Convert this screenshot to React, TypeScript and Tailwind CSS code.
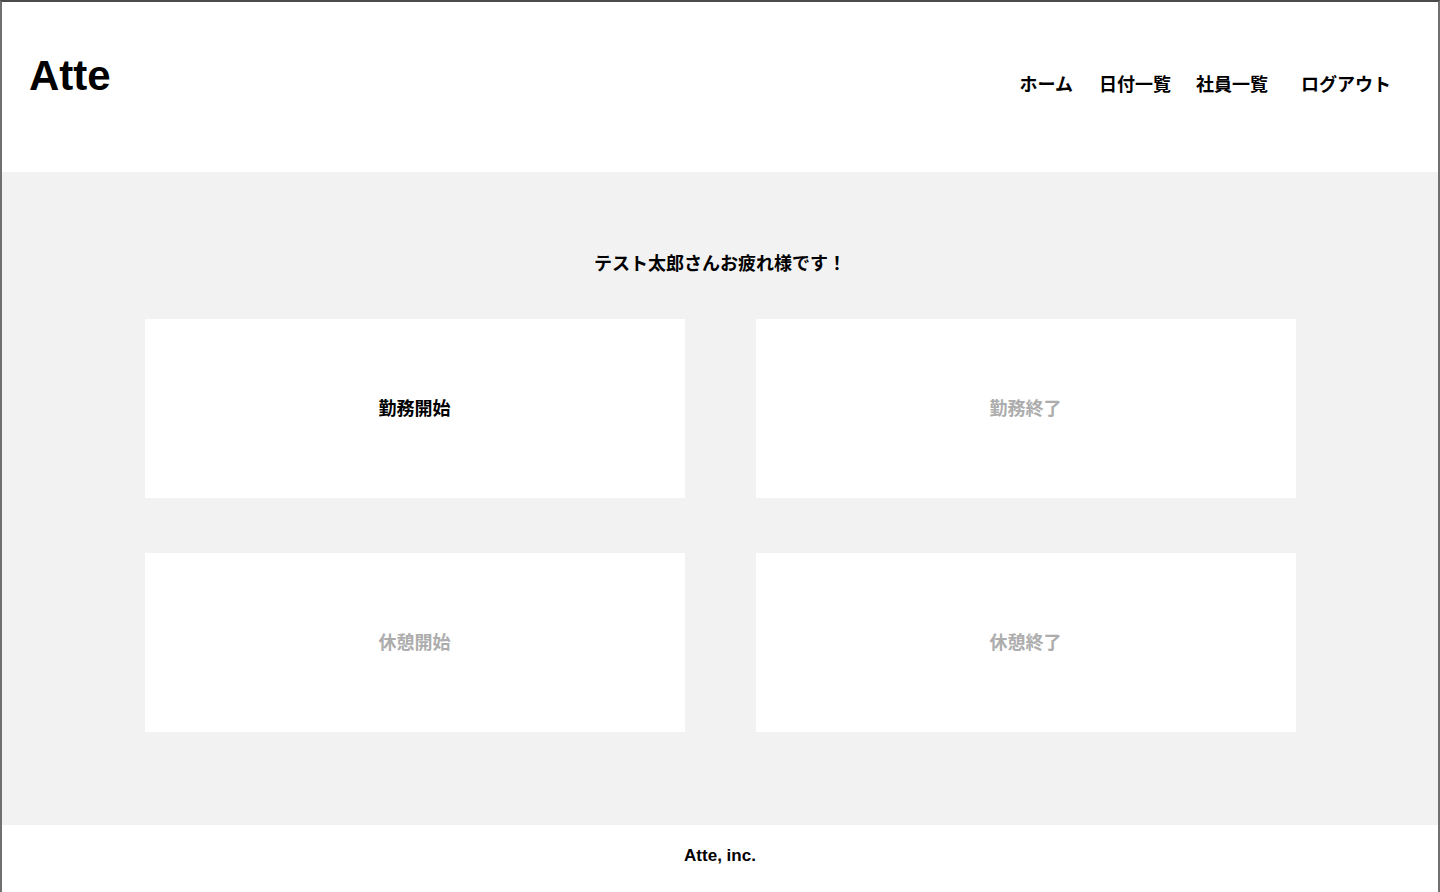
const buttons = [
  { label: "勤務開始", active: true },
  { label: "勤務終了", active: false },
  { label: "休憩開始", active: false },
  { label: "休憩終了", active: false },
];

const navItems = [
  { label: "ホーム", gap: "" },
  { label: "日付一覧", gap: "ml-[26px]" },
  { label: "社員一覧", gap: "ml-[25px]" },
  { label: "ログアウト", gap: "ml-[33px]" },
];

export default function App() {
  return (
    <div className="h-[892px] overflow-hidden border-t-2 border-x-2 border-t-[#4b4b4b] border-x-[#707070] font-['Liberation_Sans','Noto_Sans_CJK_JP',sans-serif] text-black">
      <header className="flex h-[170px] justify-between bg-white pl-[27px] pr-[47px] pt-[53px]">
        <h1 className="text-[42px] font-bold leading-[42px]">Atte</h1>
        <nav className="mt-[16px] flex h-6 items-center">
          {navItems.map((item) => (
            <a
              key={item.label}
              className={`${item.gap} font-['Noto_Sans_CJK_JP',sans-serif] text-[18px] font-bold leading-6`}
            >
              {item.label}
            </a>
          ))}
        </nav>
      </header>

      <main className="h-[653px] bg-[#f2f2f2] pt-[78px]">
        <p className="text-center font-['Noto_Sans_CJK_JP',sans-serif] text-[18px] font-bold leading-6">
          テスト太郎さんお疲れ様です！
        </p>
        <div className="mx-auto mt-[45px] grid w-[1151px] grid-cols-2 gap-x-[71px] gap-y-[55px]">
          {buttons.map((b) => (
            <button
              key={b.label}
              className={`flex h-[179px] items-center justify-center bg-white pb-[4px] font-['Noto_Sans_CJK_JP',sans-serif] text-[18px] font-bold leading-6 ${
                b.active ? "text-black" : "text-[#adadad]"
              }`}
            >
              {b.label}
            </button>
          ))}
        </div>
      </main>

      <footer className="flex h-[67px] items-center justify-center bg-white pb-[5px]">
        <small className="text-[17px] font-bold">Atte, inc.</small>
      </footer>
    </div>
  );
}
